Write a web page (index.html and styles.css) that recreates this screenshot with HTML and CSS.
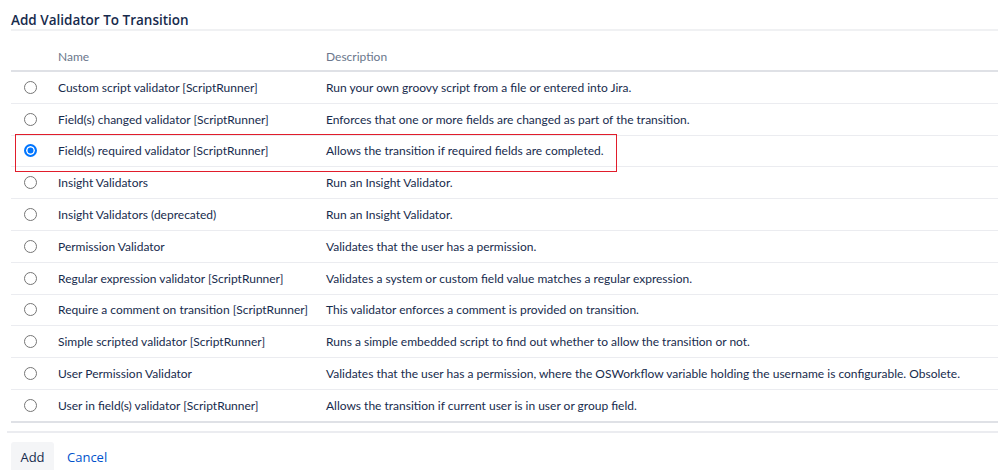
FILE: index.html
```html
<!DOCTYPE html>
<html>
<head>
<meta charset="utf-8">
<link rel="stylesheet" href="styles.css">
</head>
<body>
<div class="page">
  <h2 class="title">Add Validator To Transition</h2>
  <div class="table-wrap">
    <table class="vtable">
      <thead>
        <tr><th class="c-radio"></th><th class="c-name">Name</th><th>Description</th></tr>
      </thead>
      <tbody>
        <tr><td class="c-radio"><span class="radio"></span></td><td>Custom script validator [ScriptRunner]</td><td>Run your own groovy script from a file or entered into Jira.</td></tr>
        <tr><td class="c-radio"><span class="radio"></span></td><td>Field(s) changed validator [ScriptRunner]</td><td>Enforces that one or more fields are changed as part of the transition.</td></tr>
        <tr><td class="c-radio"><span class="radio checked"></span></td><td>Field(s) required validator [ScriptRunner]</td><td>Allows the transition if required fields are completed.</td></tr>
        <tr><td class="c-radio"><span class="radio"></span></td><td>Insight Validators</td><td>Run an Insight Validator.</td></tr>
        <tr><td class="c-radio"><span class="radio"></span></td><td>Insight Validators (deprecated)</td><td>Run an Insight Validator.</td></tr>
        <tr><td class="c-radio"><span class="radio"></span></td><td>Permission Validator</td><td>Validates that the user has a permission.</td></tr>
        <tr><td class="c-radio"><span class="radio"></span></td><td>Regular expression validator [ScriptRunner]</td><td>Validates a system or custom field value matches a regular expression.</td></tr>
        <tr><td class="c-radio"><span class="radio"></span></td><td>Require a comment on transition [ScriptRunner]</td><td>This validator enforces a comment is provided on transition.</td></tr>
        <tr><td class="c-radio"><span class="radio"></span></td><td>Simple scripted validator [ScriptRunner]</td><td>Runs a simple embedded script to find out whether to allow the transition or not.</td></tr>
        <tr><td class="c-radio"><span class="radio"></span></td><td>User Permission Validator</td><td>Validates that the user has a permission, where the OSWorkflow variable holding the username is configurable. Obsolete.</td></tr>
        <tr><td class="c-radio"><span class="radio"></span></td><td>User in field(s) validator [ScriptRunner]</td><td>Allows the transition if current user is in user or group field.</td></tr>
      </tbody>
    </table>
    <div class="highlight"></div>
  </div>
  <div class="footer">
    <button class="btn">Add</button>
    <a class="cancel" href="#">Cancel</a>
  </div>
</div>
</body>
</html>
```
FILE: styles.css
```css
html, body {
  margin: 0;
  padding: 0;
  background: #fff;
}
body {
  font-family: "Lato", "Open Sans", sans-serif;
  font-size: 12px;
  color: #172b4d;
}
.page {
  padding-left: 11px;
}
.title {
  margin: 0;
  padding-top: 11px;
  height: 18px;
  line-height: 18px;
  font-family: "Open Sans", sans-serif;
  font-size: 13.5px;
  font-weight: 600;
  color: #172b4d;
  border-bottom: 2px solid #f0f1f3;
}
.table-wrap {
  position: relative;
}
.vtable {
  width: 100%;
  border-collapse: collapse;
  table-layout: fixed;
}
.vtable th {
  text-align: left;
  font-weight: normal;
  color: #6b778c;
  height: 34px;
  padding: 0 0 5px 0;
  line-height: 16px;
  vertical-align: bottom;
  border-bottom: 2px solid #dfe1e6;
}
.vtable td {
  height: 30.8px;
  padding: 0;
  vertical-align: middle;
  border-bottom: 1px solid #ebecf0;
  white-space: nowrap;
}
.vtable tbody tr:last-child td {
  border-bottom: 2px solid #dfe1e6;
}
.c-radio {
  width: 47px;
}
.c-name {
  width: 268px;
}
.radio {
  display: block;
  box-sizing: border-box;
  width: 13px;
  height: 13px;
  margin-left: 13px;
  border: 1px solid #767676;
  border-radius: 50%;
  background: #fff;
}
.radio.checked {
  border: 2px solid #0075ff;
  background: #0075ff;
  box-shadow: inset 0 0 0 1.5px #fff;
}
.highlight {
  position: absolute;
  left: 4px;
  top: 103px;
  width: 600px;
  height: 36px;
  border: 1px solid #e11d2b;
  pointer-events: none;
}
.footer {
  margin-left: -4px;
  margin-top: 8px;
  padding: 9px 0 0 4px;
  border-top: 2px solid #ebecf0;
  display: flex;
  align-items: center;
  gap: 13px;
}
.btn {
  font-family: "Open Sans", sans-serif;
  font-size: 13px;
  color: #172b4d;
  background: #f4f5f7;
  border: none;
  border-radius: 3px;
  width: 43px;
  height: 30px;
  padding: 0;
}
.cancel {
  font-family: "Open Sans", sans-serif;
  color: #0052cc;
  text-decoration: none;
  font-size: 13px;
}
```
